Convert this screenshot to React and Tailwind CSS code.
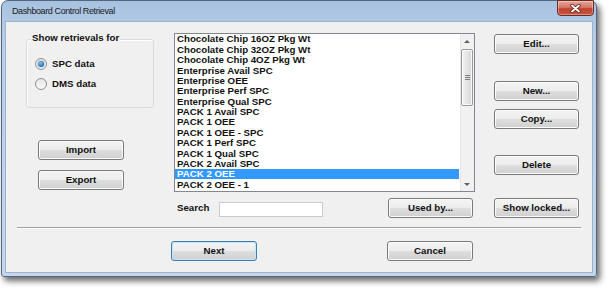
import React from 'react';

const items = [
    'Chocolate Chip 16OZ Pkg Wt',
    'Chocolate Chip 32OZ Pkg Wt',
    'Chocolate Chip 4OZ Pkg Wt',
    'Enterprise Avail SPC',
    'Enterprise OEE',
    'Enterprise Perf SPC',
    'Enterprise Qual SPC',
    'PACK 1 Avail SPC',
    'PACK 1 OEE',
    'PACK 1 OEE - SPC',
    'PACK 1 Perf SPC',
    'PACK 1 Qual SPC',
    'PACK 2 Avail SPC',
    'PACK 2 OEE',
    'PACK 2 OEE - 1',
];

const Btn = ({ children, def, className = '' }) => (
    <div
        className={`flex h-[20px] w-[85px] items-center justify-center rounded-[3px] border bg-[linear-gradient(#f4f4f4_0%,#ececec_50%,#dedede_51%,#d0d0d0_100%)] text-[9.7px] font-bold text-[#111] ${def ? 'border-[#3c7fb1] shadow-[inset_0_0_0_1px_#c4e5f6]' : 'border-[#7a7a7a] shadow-[inset_0_0_0_1px_#fbfbfb]'} ${className}`}
    >
        {children}
    </div>
);

const Radio = ({ checked, label }) => (
    <div className="flex h-[14px] items-center">
        <div className="flex h-[12px] w-[12px] items-center justify-center rounded-full border border-[#8e8f8f] bg-[linear-gradient(#e6e6e6,#fafafa)]">
            {checked && (
                <div className="h-[6px] w-[6px] rounded-full bg-[radial-gradient(circle_at_40%_35%,#8fc3ee,#2b6ea6_70%,#1b4a78)] shadow-[0_0_0_1px_#b9d6ee]" />
            )}
        </div>
        <span className="ml-[5px] text-[9.7px] font-bold text-[#111]">{label}</span>
    </div>
);

const App = () => {
    return (
        <div className="h-[293px] w-[615px] overflow-hidden bg-white font-['Liberation_Sans',Arial,sans-serif]">
            <div className="relative ml-px h-[277px] w-[596px] rounded-t-[7px] rounded-b-[3px] border border-[#53667f] bg-[linear-gradient(180deg,#a7c2e0_0%,#b9cfe8_15%,#c4d7ec_100%)] px-[4px] pb-[4px] shadow-[3px_4px_6px_rgba(0,0,0,0.6)]">
                {/* Title bar */}
                <div className="flex h-[21px] items-center pl-[6px] text-[9px] tracking-[-0.4px] text-[#1a1a1a]">
                    Dashboard Control Retrieval
                </div>
                <div className="absolute -top-px right-[2px] flex h-[16px] w-[37px] items-center justify-center rounded-b-[4px] border border-[#6b2a22] bg-[linear-gradient(#e5a598_0%,#d27a68_45%,#c0432e_55%,#c9553f_100%)] shadow-[inset_0_0_0_1px_rgba(255,255,255,0.35)]">
                    <svg width="11" height="9" viewBox="0 0 11 9">
                        <path d="M2 1.5 L9 7.5 M9 1.5 L2 7.5" stroke="#5a2018" strokeWidth="3.4" strokeLinecap="round" />
                        <path d="M2 1.5 L9 7.5 M9 1.5 L2 7.5" stroke="#ffffff" strokeWidth="1.8" strokeLinecap="round" />
                    </svg>
                </div>

                {/* Client area */}
                <div className="flex h-[250px] flex-col bg-[#f0f0f0] shadow-[0_0_0_1px_#9db3cc]">
                    <div className="flex h-[196px]">
                        {/* Left column */}
                        <div className="ml-[20px] flex w-[128px] flex-col">
                            <div className="relative mt-[17px] h-[69px] rounded-[3px] border border-[#d5dbe0] pl-[8px] pt-[17px] shadow-[inset_1px_1px_0_#ffffff]">
                                <div className="absolute -top-[8px] left-[4px] h-[12px] bg-[#f0f0f0] px-px text-[9.7px] font-bold leading-[12px] text-[#111]">
                                    Show retrievals for
                                </div>
                                <div className="flex flex-col gap-[6px]">
                                    <Radio checked label="SPC data" />
                                    <Radio label="DMS data" />
                                </div>
                            </div>
                            <div className="ml-[12px] mt-[32px] flex flex-col gap-[10px]">
                                <Btn className="w-[86px]">Import</Btn>
                                <Btn className="w-[86px]">Export</Btn>
                            </div>
                        </div>

                        {/* Middle column */}
                        <div className="ml-[20px] flex w-[301px] flex-col">
                            <div className="mt-[11px] flex h-[159px] border border-[#828790] bg-white">
                                <div className="flex-1 pr-px">
                                    {items.map((item) => (
                                        <div
                                            key={item}
                                            className={`flex h-[10.4px] items-center pl-[2px] text-[9.7px] font-bold leading-none ${item === 'PACK 2 OEE' ? 'bg-[#3399ff] text-white' : 'text-[#111]'}`}
                                        >
                                            {item}
                                        </div>
                                    ))}
                                </div>
                                <div className="flex w-[14px] flex-col bg-[#f1f1f1] shadow-[inset_1px_0_0_#e6e6e6]">
                                    <div className="flex h-[14px] items-center justify-center">
                                        <div className="h-0 w-0 border-x-[3px] border-b-[3px] border-x-transparent border-b-[#606060]" />
                                    </div>
                                    <div className="flex-1 px-px">
                                        <div className="mt-px flex h-[57px] flex-col items-center justify-center gap-px rounded-[2px] border border-[#9b9b9b] bg-[linear-gradient(90deg,#f4f4f4,#e4e4e4_50%,#d6d6d6)] shadow-[inset_0_0_0_1px_#fafafa]">
                                            <div className="h-px w-[5px] bg-[#7b7b7b]" />
                                            <div className="h-px w-[5px] bg-[#7b7b7b]" />
                                            <div className="h-px w-[5px] bg-[#7b7b7b]" />
                                        </div>
                                    </div>
                                    <div className="flex h-[14px] items-center justify-center">
                                        <div className="h-0 w-0 border-x-[3px] border-t-[3px] border-x-transparent border-t-[#606060]" />
                                    </div>
                                </div>
                            </div>
                            <div className="mt-[6px] flex h-[20px]">
                                <div className="ml-[3px] flex w-[42px] items-center text-[9.7px] font-bold text-[#111]">
                                    Search
                                </div>
                                <div className="mt-[4px] h-[15px] w-[104px] border border-[#c8ccd2] bg-white" />
                                <Btn className="ml-auto mr-[2px]">Used by...</Btn>
                            </div>
                        </div>

                        {/* Right column */}
                        <div className="ml-[19px] flex w-[85px] flex-col">
                            <Btn className="mt-[12px]">Edit...</Btn>
                            <Btn className="mt-[27px]">New...</Btn>
                            <Btn className="mt-[8px]">Copy...</Btn>
                            <Btn className="mt-[26px]">Delete</Btn>
                            <Btn className="mt-[23px]">Show locked...</Btn>
                        </div>
                    </div>

                    {/* Separator */}
                    <div className="mx-[11px] mt-[9px] h-[2px] border-t border-b border-t-[#a0a0a0] border-b-white" />

                    {/* Bottom buttons */}
                    <div className="mt-[12px] flex">
                        <Btn def className="ml-[165px] w-[86px]">Next</Btn>
                        <Btn className="ml-[130px] w-[86px]">Cancel</Btn>
                    </div>
                </div>
            </div>
        </div>
    );
};

export default App;
